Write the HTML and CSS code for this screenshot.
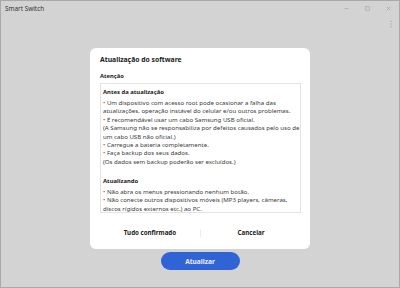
FILE: index.html
```html
<!DOCTYPE html>
<html lang="pt">

<head>
  <link rel="stylesheet" href="styles.css">
</head>

<body>
  <div class="window">
    <div class="titlebar">
      <span class="app-name">Smart Switch</span>
      <div class="controls">
        <span class="ctl">
          <svg viewBox="0 0 10 10"><path d="M2 5h6" /></svg>
        </span>
        <span class="ctl">
          <svg viewBox="0 0 10 10"><rect x="2.5" y="2.5" width="5" height="5" /></svg>
        </span>
        <span class="ctl">
          <svg viewBox="0 0 10 10"><path d="M2.5 2.5l5 5M7.5 2.5l-5 5" /></svg>
        </span>
      </div>
    </div>

    <div class="toolbar">
      <span class="more">
        <svg viewBox="0 0 4 10" fill="currentColor">
          <circle cx="2" cy="1.5" r="0.7" />
          <circle cx="2" cy="5" r="0.7" />
          <circle cx="2" cy="8.5" r="0.7" />
        </svg>
      </span>
    </div>

    <div class="stage">
      <div class="dialog">
        <h3>Atualização do software</h3>
        <h4>Atenção</h4>

        <div class="notes">
          <div class="section">
            <div class="section-title">Antes da atualização</div>
            <p><span class="dot">•</span> Um dispositivo com acesso root pode ocasionar a falha das atualizações, operação instável do celular e/ou outros problemas.</p>
            <p><span class="dot">•</span> É recomendável usar um cabo Samsung USB oficial.<br>(A Samsung não se responsabiliza por defeitos causados pelo uso de um cabo USB não oficial.)</p>
            <p><span class="dot">•</span> Carregue a bateria completamente.</p>
            <p><span class="dot">•</span> Faça backup dos seus dados.<br>(Os dados sem backup poderão ser excluídos.)</p>
          </div>

          <div class="section">
            <div class="section-title">Atualizando</div>
            <p><span class="dot">•</span> Não abra os menus pressionando nenhum botão.</p>
            <p><span class="dot">•</span> Não conecte outros dispositivos móveis (MP3 players, câmeras, discos rígidos externos etc.) ao PC.</p>
          </div>
        </div>

        <div class="actions">
          <button class="text-btn">Tudo confirmado</button>
          <span class="divider"></span>
          <button class="text-btn">Cancelar</button>
        </div>
      </div>

      <button class="primary-btn">Atualizar</button>
    </div>
  </div>
</body>

</html>
```

FILE: styles.css
```css
:root {
  --overlay: #d3d3d3;
  --frame: #a9a9a9;
  --card: #ffffff;
  --text: #1a1a1a;
  --text-soft: #3a3a3a;
  --border: #e3e3e3;
  --accent: #3064d6;
  --bullet: #b8473c;
  --radius: 6px;
}

* {
  box-sizing: border-box;
  margin: 0;
  padding: 0;
}

body {
  font-family: 'Noto Sans', 'Open Sans', sans-serif;
  color: var(--text);
}

.window {
  width: 400px;
  height: 288px;
  border: 1px solid var(--frame);
  background-color: var(--overlay);
  display: flex;
  flex-direction: column;
}

.titlebar {
  height: 14px;
  display: flex;
  align-items: center;
  justify-content: space-between;
  padding-left: 4px;
}

.app-name {
  font-size: 6.4px;
  color: #333;
}

.controls {
  display: flex;
  align-items: center;
}

.ctl {
  width: 21px;
  height: 14px;
  display: flex;
  align-items: center;
  justify-content: center;
}

.ctl svg {
  width: 7px;
  height: 7px;
  fill: none;
  stroke: #a2a2a2;
  stroke-width: 0.9;
}

.toolbar {
  height: 33px;
  display: flex;
  justify-content: flex-end;
  padding: 5px 6px 0 0;
}

.more {
  width: 4px;
  height: 8px;
  color: #8a8a8a;
}

.more svg {
  display: block;
  width: 4px;
  height: 8px;
}

.stage {
  display: flex;
  flex-direction: column;
  align-items: center;
}

.dialog {
  width: 220px;
  height: 201px;
  background: var(--card);
  border-radius: var(--radius);
  padding: 0 9px 0 10px;
  display: flex;
  flex-direction: column;
}

h3 {
  font-size: 6.8px;
  font-weight: 700;
  line-height: 10px;
  margin-top: 7px;
}

h4 {
  font-size: 5.8px;
  font-weight: 700;
  line-height: 9px;
  margin-top: 7px;
}

.notes {
  margin-top: 2px;
  height: 130px;
  border: 1px solid var(--border);
  padding: 4px 0 20px 2px;
  overflow-y: scroll;
  font-size: 6.1px;
  line-height: 8.4px;
  color: var(--text-soft);
}

.notes::-webkit-scrollbar {
  width: 3px;
}

.notes::-webkit-scrollbar-track {
  background: #f4f4f4;
}

.notes::-webkit-scrollbar-thumb {
  background: #d4d4d4;
  border-left: 0.5px solid #f4f4f4;
}

.section + .section {
  margin-top: 10.5px;
}

.section-title {
  font-size: 5.9px;
  font-weight: 700;
  color: var(--text);
  line-height: 9px;
  margin-bottom: 2px;
}

.dot {
  color: var(--bullet);
}

.actions {
  flex: 1;
  display: flex;
  align-items: center;
  padding-top: 3px;
}

.text-btn {
  flex: 1;
  background: none;
  border: none;
  font-family: inherit;
  font-size: 6.2px;
  font-weight: 700;
  color: var(--text);
  cursor: pointer;
}

.divider {
  width: 1px;
  height: 8px;
  background: #ececec;
}

.primary-btn {
  margin-top: 3px;
  width: 79px;
  height: 18px;
  border: none;
  border-radius: 9px;
  background: var(--accent);
  color: #e8eefc;
  font-family: inherit;
  font-size: 6.6px;
  font-weight: 700;
  cursor: pointer;
}
```
